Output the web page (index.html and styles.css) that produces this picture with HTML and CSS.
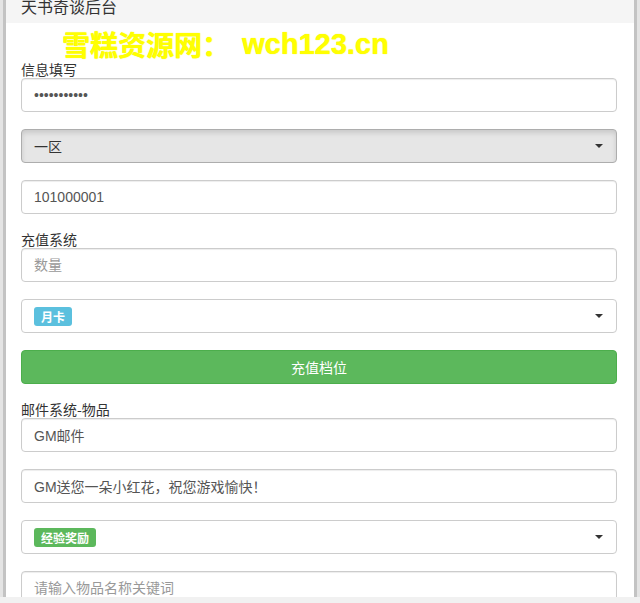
FILE: index.html
```html
<!DOCTYPE html>
<html lang="zh-CN">
<head>
<meta charset="utf-8">
<title>天书奇谈后台</title>
<link rel="stylesheet" href="styles.css">
</head>
<body>
<div class="page">
  <div class="heading">天书奇谈后台</div>
  <div class="watermark">雪糕资源网：<span class="wm-latin">wch123.cn</span></div>
  <div class="body">
    <div class="label">信息填写</div>
    <div class="group"><input class="field" type="password" value="12345678901"></div>
    <div class="group">
      <div class="select active"><span class="sel-text">一区</span><span class="caret"></span></div>
    </div>
    <div class="group"><input class="field" type="text" value="101000001"></div>

    <div class="label">充值系统</div>
    <div class="group"><input class="field" type="text" placeholder="数量"></div>
    <div class="group">
      <div class="select"><span class="badge badge-info">月卡</span><span class="caret"></span></div>
    </div>
    <div class="group"><button class="btn-success" type="button">充值档位</button></div>

    <div class="label">邮件系统-物品</div>
    <div class="group"><input class="field" type="text" value="GM邮件"></div>
    <div class="group"><input class="field" type="text" value="GM送您一朵小红花，祝您游戏愉快！"></div>
    <div class="group">
      <div class="select"><span class="badge badge-success">经验奖励</span><span class="caret"></span></div>
    </div>
    <div class="group"><input class="field" type="text" placeholder="请输入物品名称关键词"></div>
  </div>
</div>
<div class="bottom-strip"></div>
</body>
</html>
```

FILE: styles.css
```css
html, body {
  margin: 0;
  padding: 0;
}
body {
  background: #e4e4e4;
  font-family: "Liberation Sans", Arial, "Noto Sans CJK SC", sans-serif;
  font-size: 14px;
  color: #333;
  overflow: hidden;
}
.page {
  position: relative;
  margin: 0 3px;
  border-left: 3px solid #c3c3c3;
  border-right: 3px solid #c3c3c3;
  background: #fff;
  min-height: 603px;
}
.heading {
  height: 23px;
  line-height: 13px;
  padding: 0 15px;
  background: #f5f5f5;
  font-size: 16px;
  color: #333;
  font-family: "Noto Sans CJK SC", sans-serif;
  overflow: hidden;
}
.watermark {
  position: absolute;
  left: 56px;
  top: 30px;
  font-size: 28px;
  line-height: 28px;
  font-weight: bold;
  color: #ffff00;
  font-family: "Noto Sans CJK SC", sans-serif;
  white-space: nowrap;
  text-shadow: 0 0 1px #f0f000;
}
.wm-latin {
  display: inline-block;
  margin-left: 12px;
  font-family: "Liberation Sans", Arial, sans-serif;
  font-size: 29px;
  vertical-align: top;
}
.body {
  padding: 38px 17px 0 15px;
}
.label {
  height: 17px;
  line-height: 17px;
  font-size: 14px;
  color: #333;
  font-family: "Noto Sans CJK SC", sans-serif;
}
.group {
  margin-bottom: 17px;
}
.field {
  display: block;
  box-sizing: border-box;
  width: 100%;
  height: 34px;
  padding: 6px 12px;
  border: 1px solid #ccc;
  border-radius: 4px;
  background: #fff;
  color: #555;
  font-family: "Liberation Sans", Arial, "Noto Sans CJK SC", sans-serif;
  font-size: 14px;
  box-shadow: inset 0 1px 1px rgba(0,0,0,.075);
  outline: none;
}
.field::placeholder {
  color: #999;
}
.select {
  box-sizing: border-box;
  height: 34px;
  padding: 0 12px;
  border: 1px solid #ccc;
  border-radius: 4px;
  background: #fff;
  display: flex;
  align-items: center;
  justify-content: space-between;
  color: #333;
  font-family: "Noto Sans CJK SC", sans-serif;
}
.select.active {
  background: #e6e6e6;
  border-color: #adadad;
  box-shadow: inset 0 3px 5px rgba(0,0,0,.125);
}
.sel-text {
  font-size: 14px;
}
.caret {
  width: 0;
  height: 0;
  border-top: 4px solid #333;
  border-left: 4px solid transparent;
  border-right: 4px solid transparent;
  margin-right: 1px;
}
.badge {
  display: inline-block;
  height: 19px;
  line-height: 19px;
  padding: 0 7px;
  border-radius: 3px;
  color: #fff;
  font-size: 12px;
  font-weight: bold;
  font-family: "Noto Sans CJK SC", sans-serif;
}
.badge-info {
  background: #5bc0de;
}
.badge-success {
  background: #5cb85c;
}
.btn-success {
  display: block;
  box-sizing: border-box;
  width: 100%;
  height: 34px;
  border: 1px solid #4cae4c;
  border-radius: 4px;
  background: #5cb85c;
  color: #fff;
  font-size: 14px;
  font-family: "Noto Sans CJK SC", sans-serif;
  padding: 0;
}
.bottom-strip {
  position: fixed;
  left: 0;
  right: 0;
  bottom: 0;
  height: 6px;
  background: #f1f1f1;
}
```
